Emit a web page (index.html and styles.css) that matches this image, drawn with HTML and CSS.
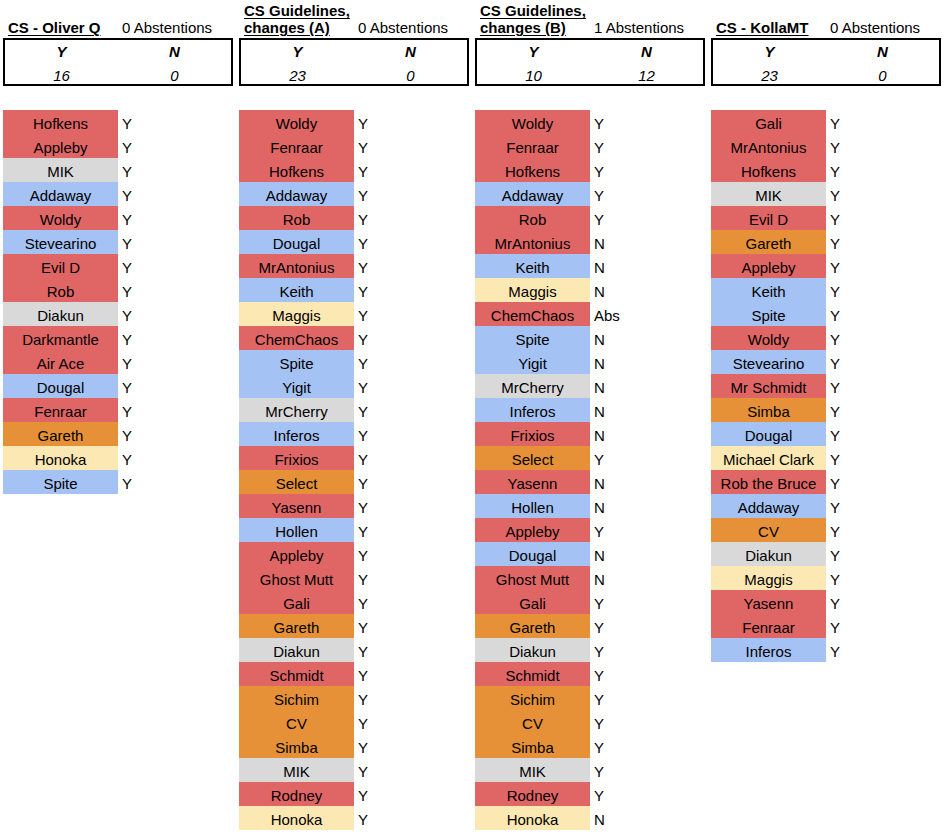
FILE: index.html
```html
<!DOCTYPE html>
<html lang="en">
<head>
<meta charset="utf-8">
<title>CS votes</title>
<link rel="stylesheet" href="styles.css">
</head>
<body>
<main class="sheet">
  <section class="group">
    <div class="head"><div class="title">CS - Oliver Q</div><div class="abst">0 Abstentions</div></div>
    <div class="tally"><div class="th">Y</div><div class="th">N</div><div class="tv">16</div><div class="tv">0</div></div>
    <ul class="votes">
      <li><span class="name red">Hofkens</span><span class="vote">Y</span></li>
      <li><span class="name red">Appleby</span><span class="vote">Y</span></li>
      <li><span class="name grey">MIK</span><span class="vote">Y</span></li>
      <li><span class="name blue">Addaway</span><span class="vote">Y</span></li>
      <li><span class="name red">Woldy</span><span class="vote">Y</span></li>
      <li><span class="name blue">Stevearino</span><span class="vote">Y</span></li>
      <li><span class="name red">Evil D</span><span class="vote">Y</span></li>
      <li><span class="name red">Rob</span><span class="vote">Y</span></li>
      <li><span class="name grey">Diakun</span><span class="vote">Y</span></li>
      <li><span class="name red">Darkmantle</span><span class="vote">Y</span></li>
      <li><span class="name red">Air Ace</span><span class="vote">Y</span></li>
      <li><span class="name blue">Dougal</span><span class="vote">Y</span></li>
      <li><span class="name red">Fenraar</span><span class="vote">Y</span></li>
      <li><span class="name orange">Gareth</span><span class="vote">Y</span></li>
      <li><span class="name yellow">Honoka</span><span class="vote">Y</span></li>
      <li><span class="name blue">Spite</span><span class="vote">Y</span></li>
    </ul>
  </section>

  <section class="group">
    <div class="head"><div class="title">CS Guidelines, changes (A)</div><div class="abst">0 Abstentions</div></div>
    <div class="tally"><div class="th">Y</div><div class="th">N</div><div class="tv plain">23</div><div class="tv">0</div></div>
    <ul class="votes">
      <li><span class="name red">Woldy</span><span class="vote">Y</span></li>
      <li><span class="name red">Fenraar</span><span class="vote">Y</span></li>
      <li><span class="name red">Hofkens</span><span class="vote">Y</span></li>
      <li><span class="name blue">Addaway</span><span class="vote">Y</span></li>
      <li><span class="name red">Rob</span><span class="vote">Y</span></li>
      <li><span class="name blue">Dougal</span><span class="vote">Y</span></li>
      <li><span class="name red">MrAntonius</span><span class="vote">Y</span></li>
      <li><span class="name blue">Keith</span><span class="vote">Y</span></li>
      <li><span class="name yellow">Maggis</span><span class="vote">Y</span></li>
      <li><span class="name red">ChemChaos</span><span class="vote">Y</span></li>
      <li><span class="name blue">Spite</span><span class="vote">Y</span></li>
      <li><span class="name blue">Yigit</span><span class="vote">Y</span></li>
      <li><span class="name grey">MrCherry</span><span class="vote">Y</span></li>
      <li><span class="name blue">Inferos</span><span class="vote">Y</span></li>
      <li><span class="name red">Frixios</span><span class="vote">Y</span></li>
      <li><span class="name orange">Select</span><span class="vote">Y</span></li>
      <li><span class="name red">Yasenn</span><span class="vote">Y</span></li>
      <li><span class="name blue">Hollen</span><span class="vote">Y</span></li>
      <li><span class="name red">Appleby</span><span class="vote">Y</span></li>
      <li><span class="name red">Ghost Mutt</span><span class="vote">Y</span></li>
      <li><span class="name red">Gali</span><span class="vote">Y</span></li>
      <li><span class="name orange">Gareth</span><span class="vote">Y</span></li>
      <li><span class="name grey">Diakun</span><span class="vote">Y</span></li>
      <li><span class="name red">Schmidt</span><span class="vote">Y</span></li>
      <li><span class="name orange">Sichim</span><span class="vote">Y</span></li>
      <li><span class="name orange">CV</span><span class="vote">Y</span></li>
      <li><span class="name orange">Simba</span><span class="vote">Y</span></li>
      <li><span class="name grey">MIK</span><span class="vote">Y</span></li>
      <li><span class="name red">Rodney</span><span class="vote">Y</span></li>
      <li><span class="name yellow">Honoka</span><span class="vote">Y</span></li>
    </ul>
  </section>

  <section class="group">
    <div class="head"><div class="title">CS Guidelines, changes (B)</div><div class="abst">1 Abstentions</div></div>
    <div class="tally"><div class="th">Y</div><div class="th">N</div><div class="tv">10</div><div class="tv">12</div></div>
    <ul class="votes">
      <li><span class="name red">Woldy</span><span class="vote">Y</span></li>
      <li><span class="name red">Fenraar</span><span class="vote">Y</span></li>
      <li><span class="name red">Hofkens</span><span class="vote">Y</span></li>
      <li><span class="name blue">Addaway</span><span class="vote">Y</span></li>
      <li><span class="name red">Rob</span><span class="vote">Y</span></li>
      <li><span class="name red">MrAntonius</span><span class="vote">N</span></li>
      <li><span class="name blue">Keith</span><span class="vote">N</span></li>
      <li><span class="name yellow">Maggis</span><span class="vote">N</span></li>
      <li><span class="name red">ChemChaos</span><span class="vote">Abs</span></li>
      <li><span class="name blue">Spite</span><span class="vote">N</span></li>
      <li><span class="name blue">Yigit</span><span class="vote">N</span></li>
      <li><span class="name grey">MrCherry</span><span class="vote">N</span></li>
      <li><span class="name blue">Inferos</span><span class="vote">N</span></li>
      <li><span class="name red">Frixios</span><span class="vote">N</span></li>
      <li><span class="name orange">Select</span><span class="vote">Y</span></li>
      <li><span class="name red">Yasenn</span><span class="vote">N</span></li>
      <li><span class="name blue">Hollen</span><span class="vote">N</span></li>
      <li><span class="name red">Appleby</span><span class="vote">Y</span></li>
      <li><span class="name blue">Dougal</span><span class="vote">N</span></li>
      <li><span class="name red">Ghost Mutt</span><span class="vote">N</span></li>
      <li><span class="name red">Gali</span><span class="vote">Y</span></li>
      <li><span class="name orange">Gareth</span><span class="vote">Y</span></li>
      <li><span class="name grey">Diakun</span><span class="vote">Y</span></li>
      <li><span class="name red">Schmidt</span><span class="vote">Y</span></li>
      <li><span class="name orange">Sichim</span><span class="vote">Y</span></li>
      <li><span class="name orange">CV</span><span class="vote">Y</span></li>
      <li><span class="name orange">Simba</span><span class="vote">Y</span></li>
      <li><span class="name grey">MIK</span><span class="vote">Y</span></li>
      <li><span class="name red">Rodney</span><span class="vote">Y</span></li>
      <li><span class="name yellow">Honoka</span><span class="vote">N</span></li>
    </ul>
  </section>

  <section class="group">
    <div class="head"><div class="title">CS - KollaMT</div><div class="abst">0 Abstentions</div></div>
    <div class="tally"><div class="th">Y</div><div class="th">N</div><div class="tv">23</div><div class="tv">0</div></div>
    <ul class="votes">
      <li><span class="name red">Gali</span><span class="vote">Y</span></li>
      <li><span class="name red">MrAntonius</span><span class="vote">Y</span></li>
      <li><span class="name red">Hofkens</span><span class="vote">Y</span></li>
      <li><span class="name grey">MIK</span><span class="vote">Y</span></li>
      <li><span class="name red">Evil D</span><span class="vote">Y</span></li>
      <li><span class="name orange">Gareth</span><span class="vote">Y</span></li>
      <li><span class="name red">Appleby</span><span class="vote">Y</span></li>
      <li><span class="name blue">Keith</span><span class="vote">Y</span></li>
      <li><span class="name blue">Spite</span><span class="vote">Y</span></li>
      <li><span class="name red">Woldy</span><span class="vote">Y</span></li>
      <li><span class="name blue">Stevearino</span><span class="vote">Y</span></li>
      <li><span class="name red">Mr Schmidt</span><span class="vote">Y</span></li>
      <li><span class="name orange">Simba</span><span class="vote">Y</span></li>
      <li><span class="name blue">Dougal</span><span class="vote">Y</span></li>
      <li><span class="name yellow">Michael Clark</span><span class="vote">Y</span></li>
      <li><span class="name red">Rob the Bruce</span><span class="vote">Y</span></li>
      <li><span class="name blue">Addaway</span><span class="vote">Y</span></li>
      <li><span class="name orange">CV</span><span class="vote">Y</span></li>
      <li><span class="name grey">Diakun</span><span class="vote">Y</span></li>
      <li><span class="name yellow">Maggis</span><span class="vote">Y</span></li>
      <li><span class="name red">Yasenn</span><span class="vote">Y</span></li>
      <li><span class="name red">Fenraar</span><span class="vote">Y</span></li>
      <li><span class="name blue">Inferos</span><span class="vote">Y</span></li>
    </ul>
  </section>
</main>
</body>
</html>
```

FILE: styles.css
```css
* { box-sizing: border-box; }

html, body {
  margin: 0;
  padding: 0;
  background: #ffffff;
}

body {
  font-family: "Liberation Sans", Arial, sans-serif;
  font-size: 15px;
  color: #000000;
}

.sheet {
  display: flex;
  align-items: flex-start;
  gap: 6px;
  padding-left: 3px;
}

.group {
  width: 230px;
  flex: none;
}

.head {
  height: 38px;
  display: flex;
  align-items: flex-end;
  padding-bottom: 2px;
}

.title {
  width: 115px;
  flex: none;
  padding-left: 5px;
  font-weight: bold;
  text-decoration: underline;
  text-underline-offset: 2px;
  line-height: 17px;
}

.abst {
  padding-left: 4px;
  line-height: 17px;
  white-space: nowrap;
}

.tally {
  width: 230px;
  height: 48px;
  border: 2px solid #000000;
  display: grid;
  grid-template-columns: 113px 113px;
  grid-template-rows: 22px 22px;
}

.tally > div {
  text-align: center;
  line-height: 22px;
  font-style: italic;
  padding-top: 1px;
}

.tally .th {
  font-weight: bold;
}

.tally .tv {
  padding-top: 3px;
}

.votes {
  list-style: none;
  margin: 24px 0 0 0;
  padding: 0;
}

.votes li {
  display: flex;
  height: 24px;
  line-height: 21px;
}

.name {
  width: 115px;
  flex: none;
  padding-top: 3px;
  text-align: center;
  white-space: nowrap;
  overflow: hidden;
}

.vote {
  padding-top: 3px;
  padding-left: 4px;
}

.red { background: #e06666; }
.blue { background: #a4c2f4; }
.grey { background: #d9d9d9; }
.orange { background: #e69138; }
.yellow { background: #fce8b2; }
```
